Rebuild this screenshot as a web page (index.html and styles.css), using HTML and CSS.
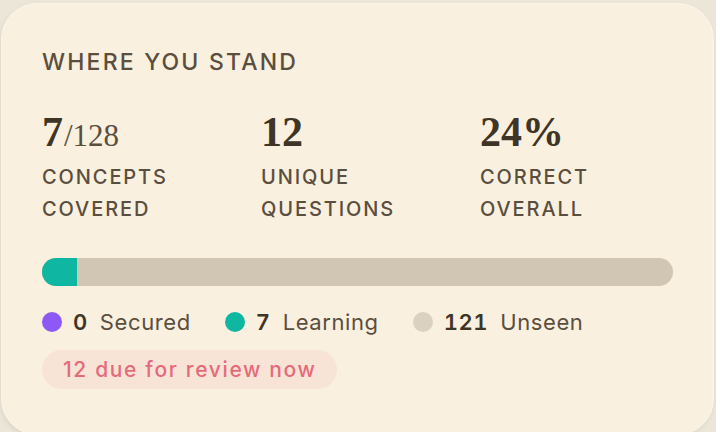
FILE: index.html
```html
<!DOCTYPE html>
<html lang="en">
<head>
<meta charset="utf-8">
<link rel="stylesheet" href="styles.css">
</head>
<body>
<section class="card">
  <h2 class="title">WHERE YOU STAND</h2>
  <div class="stats">
    <div class="stat">
      <div class="value"><b>7</b><span class="total">/128</span></div>
      <div class="label">CONCEPTS<br>COVERED</div>
    </div>
    <div class="stat">
      <div class="value"><b>12</b></div>
      <div class="label">UNIQUE<br>QUESTIONS</div>
    </div>
    <div class="stat">
      <div class="value"><b>24%</b></div>
      <div class="label">CORRECT<br>OVERALL</div>
    </div>
  </div>
  <div class="bar"><div class="fill" style="width:5.47%"></div></div>
  <div class="legend">
    <div class="item"><span class="dot purple"></span><b>0</b><span class="name">Secured</span></div>
    <div class="item"><span class="dot teal"></span><b>7</b><span class="name">Learning</span></div>
    <div class="item"><span class="dot grey"></span><b>121</b><span class="name">Unseen</span></div>
  </div>
  <div class="badge">12 due for review now</div>
</section>
</body>
</html>
```
FILE: styles.css
```css
html, body {
  margin: 0;
  padding: 0;
  background: #ece6d9;
}
body {
  padding: 3px 2px 0 1px;
  font-family: Inter, "Noto Sans", sans-serif;
  color: #5a4e3e;
}
.card {
  box-sizing: border-box;
  height: 432px;
  background: #faf0df;
  border-radius: 36px;
  border: 1px solid #fbf6ec;
  box-shadow: -1px 2px 4px rgba(120, 105, 80, 0.12);
  padding: 44px 40px 0 40px;
}
.title {
  margin: 0;
  font-size: 23px;
  font-weight: 500;
  letter-spacing: 2.2px;
  line-height: 28px;
  color: #5a4e3e;
}
.stats {
  display: grid;
  grid-template-columns: 219px 219px 1fr;
  margin-top: 34px;
}
.value {
  font-family: "Liberation Serif", serif;
  color: #3f3526;
  line-height: 44px;
  height: 44px;
}
.value b {
  font-size: 42px;
  font-weight: 700;
}
.value .total {
  font-size: 31px;
  font-weight: 400;
  color: #5a4e3e;
  margin-left: 1px;
}
.label {
  margin-top: 7px;
  font-size: 20px;
  font-weight: 500;
  letter-spacing: 1.9px;
  line-height: 32px;
}
.bar {
  margin-top: 33px;
  height: 28px;
  border-radius: 14px;
  background: #d1c6b3;
  overflow: hidden;
}
.fill {
  height: 100%;
  background: #0fb7a2;
}
.legend {
  display: flex;
  align-items: center;
  gap: 34px;
  margin-top: 22px;
  height: 28px;
  font-size: 22px;
  letter-spacing: 0.6px;
}
.item {
  display: flex;
  align-items: center;
}
.dot {
  width: 20px;
  height: 20px;
  border-radius: 50%;
  margin-right: 11px;
}
.purple { background: #8c58f6; }
.teal { background: #0fb7a2; }
.grey { background: #dbd1c1; }
.item b {
  font-weight: 600;
  color: #3f3526;
  margin-right: 12px;
  font-variant-numeric: tabular-nums;
}
.name {
  color: #5a4e3e;
}
.badge {
  display: inline-block;
  margin-top: 14px;
  height: 39px;
  line-height: 39px;
  padding: 0 20px 0 21px;
  border-radius: 20px;
  background: #f8e4d6;
  color: #e56b7a;
  font-size: 21px;
  font-weight: 500;
  letter-spacing: 1.65px;
}
```
